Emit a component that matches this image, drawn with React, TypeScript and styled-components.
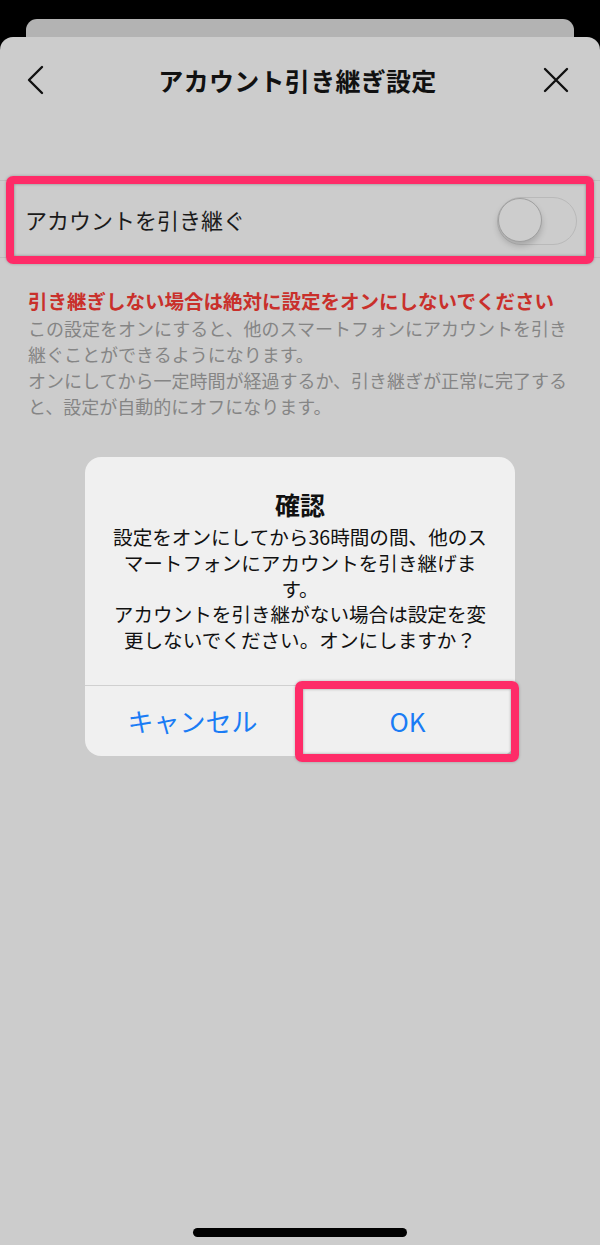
import React, { useState } from "react";
import styled, { createGlobalStyle } from "styled-components";

const GlobalStyle = createGlobalStyle`
	html, body {
		margin: 0;
		padding: 0;
		background: #000;
	}
	body {
		font-family: "Noto Sans CJK JP", "Noto Sans", sans-serif;
		-webkit-font-smoothing: antialiased;
	}
`;

const bodyLines = [
	"設定をオンにしてから36時間の間、他のス",
	"マートフォンにアカウントを引き継げま",
	"す。",
	"アカウントを引き継がない場合は設定を変",
	"更しないでください。オンにしますか？",
];

const App = () => {
	const [enabled, setEnabled] = useState(false);

	return (
		<>
			<GlobalStyle />
			<Screen>
				<BackCard />
				<Sheet>
					<Header>
						<IconButton aria-label="戻る" $side="start">
							<svg width="18" height="30" viewBox="0 0 18 30" fill="none">
								<path
									d="M16 2 L3 15 L16 28"
									stroke="#111"
									strokeWidth="2.4"
									strokeLinecap="round"
									strokeLinejoin="round"
								/>
							</svg>
						</IconButton>
						<Title>アカウント引き継ぎ設定</Title>
						<IconButton aria-label="閉じる" $side="end">
							<svg width="26" height="26" viewBox="0 0 26 26" fill="none">
								<path
									d="M2 2 L24 24 M24 2 L2 24"
									stroke="#111"
									strokeWidth="2.4"
									strokeLinecap="round"
								/>
							</svg>
						</IconButton>
					</Header>

					<Row>
						<RowLabel>アカウントを引き継ぐ</RowLabel>
						<Toggle $on={enabled} onClick={() => setEnabled(!enabled)}>
							<Knob $on={enabled} />
						</Toggle>
						<Highlight $inset="-5px 6px -7px 6px" />
					</Row>

					<Notes>
						<Warning>引き継ぎしない場合は絶対に設定をオンにしないでください</Warning>
						<Desc>
							この設定をオンにすると、他のスマートフォンにアカウントを引き継ぐことができるようになります。
						</Desc>
						<Desc>
							オンにしてから一定時間が経過するか、引き継ぎが正常に完了すると、設定が自動的にオフになります。
						</Desc>
					</Notes>

					<HomeBar />
				</Sheet>

				<Dialog>
					<DialogBody>
						<DialogTitle>確認</DialogTitle>
						{bodyLines.map((line) => (
							<DialogLine key={line}>{line}</DialogLine>
						))}
					</DialogBody>
					<Actions>
						<Action>キャンセル</Action>
						<Action onClick={() => setEnabled(true)}>
							OK
							<Highlight $inset="-5px -4px -6px -5px" />
						</Action>
					</Actions>
				</Dialog>
			</Screen>
		</>
	);
};

export default App;

const Screen = styled.div`
	position: relative;
	width: 600px;
	height: 1245px;
	overflow: hidden;
	background: #000;
	padding-top: 19px;
	box-sizing: border-box;
	display: flex;
	flex-direction: column;
`;

const BackCard = styled.div`
	height: 18px;
	margin: 0 26px;
	background: #b3b3b3;
	border-radius: 11px 11px 0 0;
`;

const Sheet = styled.div`
	flex: 1;
	background: #cccccc;
	border-radius: 13px 13px 0 0;
	display: flex;
	flex-direction: column;
`;

const Header = styled.div`
	height: 88px;
	display: grid;
	grid-template-columns: 1fr auto 1fr;
	align-items: center;
	padding: 0 31px 0 26px;
	margin-top: -1px;
`;

const IconButton = styled.button<{ $side: "start" | "end" }>`
	justify-self: ${(p) => p.$side};
	background: none;
	border: none;
	padding: 0;
	display: flex;
	cursor: pointer;
`;

const Title = styled.h1`
	margin: 0;
	font-size: 25px;
	font-weight: 700;
	color: #111;
	letter-spacing: 0.3px;
`;

const Row = styled.div`
	position: relative;
	margin-top: 56px;
	height: 76px;
	display: flex;
	align-items: center;
	justify-content: space-between;
	padding: 0 23px 0 25px;
	border-top: 1px solid #bdbdbd;
	border-bottom: 1px solid #bdbdbd;
`;

const RowLabel = styled.span`
	font-size: 22px;
	color: #1a1a1a;
	font-weight: 400;
`;

const Toggle = styled.div<{ $on: boolean }>`
	position: relative;
	width: 80px;
	height: 48px;
	box-sizing: border-box;
	border-radius: 24px;
	border: 1.5px solid ${(p) => (p.$on ? "#34c759" : "#b9b9b9")};
	background: ${(p) => (p.$on ? "#34c759" : "transparent")};
	margin-top: 4px;
	cursor: pointer;
`;

const Knob = styled.div<{ $on: boolean }>`
	position: absolute;
	top: 0;
	left: ${(p) => (p.$on ? "34px" : "0")};
	width: 44px;
	height: 44px;
	border-radius: 50%;
	box-sizing: border-box;
	border: 1.5px solid #9f9f9f;
	background: #cdcdcd;
	box-shadow: 0 4px 6px rgba(0, 0, 0, 0.18);
`;

// pink call-out frame drawn over a row or a button
const Highlight = styled.div<{ $inset: string }>`
	position: absolute;
	inset: ${(p) => p.$inset};
	border: 8px solid #fe2c68;
	border-radius: 7px;
	box-shadow: inset 0 0 3px rgba(0, 0, 0, 0.35), 0 0 3px rgba(0, 0, 0, 0.25);
	pointer-events: none;
`;

const Notes = styled.div`
	padding: 28px 26px 0 28px;
`;

const Warning = styled.p`
	margin: 0;
	font-size: 19.5px;
	line-height: 29px;
	font-weight: 700;
	color: #c9302b;
`;

const Desc = styled.p`
	margin: 0;
	font-size: 18px;
	line-height: 26px;
	color: #858585;
`;

const HomeBar = styled.div`
	margin: auto auto 8px;
	width: 214px;
	height: 9px;
	border-radius: 5px;
	background: #000;
`;

const Dialog = styled.div`
	position: absolute;
	top: 457px;
	left: 85px;
	width: 430px;
	background: #f0f0f0;
	border-radius: 16px;
`;

const DialogBody = styled.div`
	padding: 30px 16px 32px;
	display: flex;
	flex-direction: column;
	align-items: center;
	border-bottom: 1px solid #d0d0d0;
`;

const DialogTitle = styled.div`
	font-size: 25px;
	line-height: 34px;
	font-weight: 700;
	color: #111;
	margin-bottom: 3px;
`;

const DialogLine = styled.div`
	font-size: 19.6px;
	line-height: 25.8px;
	color: #111;
	white-space: nowrap;
`;

const Actions = styled.div`
	display: grid;
	grid-template-columns: 1fr 1fr;
	height: 70px;
`;

const Action = styled.button`
	position: relative;
	background: none;
	border: none;
	font-family: inherit;
	font-size: 26px;
	color: #1a7cf5;
	cursor: pointer;
`;
